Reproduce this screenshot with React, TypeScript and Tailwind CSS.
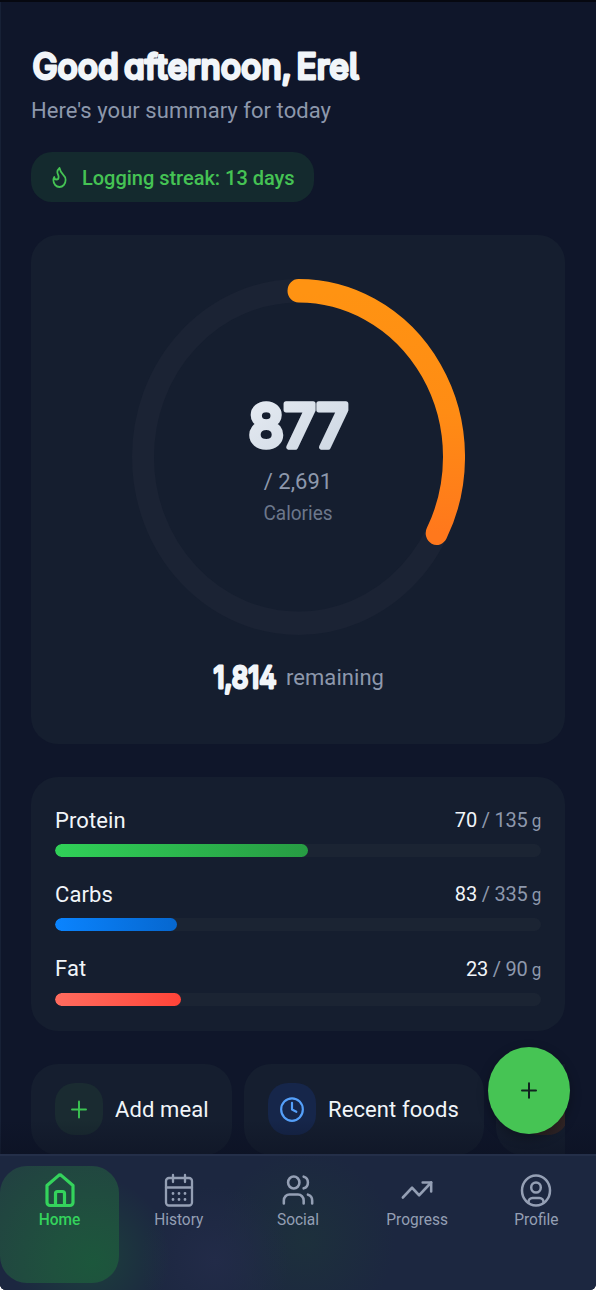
import type { ReactNode } from 'react';
import { Clock, Flame, Plus, TrendingUp, Users } from 'lucide-react';
import clsx from 'clsx';

const MACROS = [
  { name: 'Protein', value: 70, goal: 135, width: 52, bar: 'from-[#30d158] to-[#279c43]' },
  { name: 'Carbs', value: 83, goal: 335, width: 25, bar: 'from-[#0a84ff] to-[#0667cf]' },
  { name: 'Fat', value: 23, goal: 90, width: 26, bar: 'from-[#ff6b5e] to-[#ff4338]' },
];

const NAV_ITEMS = [
  { label: 'Home', icon: <HomeIcon /> },
  { label: 'History', icon: <CalendarIcon /> },
  { label: 'Social', icon: <Users preserveAspectRatio="none" strokeWidth={1.8} className="h-9 w-8.5" /> },
  { label: 'Progress', icon: <TrendingUp preserveAspectRatio="none" strokeWidth={1.8} className="h-9 w-8.5" /> },
  { label: 'Profile', icon: <ProfileIcon /> },
];

function HomeIcon() {
  return (
    <svg viewBox="0 0 34 36" className="h-9 w-8.5" fill="none" stroke="currentColor" strokeWidth="3.200" strokeLinejoin="round">
      <path d="M4 13.500 15.200 3.900a2.600 2.600 0 0 1 3.600 0L30 13.500V30.500a3 3 0 0 1-3 3H7a3 3 0 0 1-3-3Z" />
      <path d="M12.500 33V21.500a2 2 0 0 1 2-2h5a2 2 0 0 1 2 2V33" />
    </svg>
  );
}

function CalendarIcon() {
  return (
    <svg viewBox="0 0 34 36" className="h-9 w-8.5" fill="none" stroke="currentColor" strokeWidth="2.300" strokeLinecap="round">
      <rect x="4" y="6" width="26" height="27.500" rx="3" />
      <path d="M4 15.500h26M11 3v7M23 3v7" />
      <path strokeWidth="2.800" d="M11 21.500h.01M17 21.500h.01M23 21.500h.01M11 27.500h.01M17 27.500h.01M23 27.500h.01" />
    </svg>
  );
}

function ProfileIcon() {
  return (
    <svg viewBox="0 0 34 36" className="h-9 w-8.5" fill="none" stroke="currentColor" strokeWidth="2.500">
      <ellipse cx="17" cy="18.500" rx="14" ry="15" />
      <ellipse cx="17" cy="15.500" rx="4.800" ry="5" />
      <path d="M9.500 31v-1a4 4 0 0 1 4-4h7a4 4 0 0 1 4 4v1" />
    </svg>
  );
}

function CalorieRing() {
  return (
    <svg viewBox="0 0 333 333" preserveAspectRatio="none" className="h-[356px] w-[333px]" fill="none" strokeWidth="22">
      <defs>
        <linearGradient id="ring" x1="0" y1="0" x2="0" y2="1">
          <stop offset="0" stopColor="#ff9312" />
          <stop offset="0.5" stopColor="#ff8c14" />
          <stop offset="1" stopColor="#ff781c" />
        </linearGradient>
      </defs>
      <circle cx="166.500" cy="166.500" r="155.500" stroke="#1b2334" />
      <path d="M166.500 11A155.500 155.500 0 0 1 304.700 237.800" stroke="url(#ring)" strokeLinecap="round" />
    </svg>
  );
}

interface RoundedTextProps {
  children: string;
  width: number;
  height: number;
  size: number;
  stroke: number;
  fill?: string;
}

// Soft display lettering: a round-joined stroke around the text rounds off its corners
function RoundedText({ children, width, height, size, stroke, fill = '#f1f5f9' }: RoundedTextProps) {
  return (
    <svg width={width} height={height} className="overflow-visible">
      <defs>
        <linearGradient id="shine" x1="0" y1="0" x2="1" y2="1">
          <stop offset="0" stopColor="#e7ecf3" />
          <stop offset="1" stopColor="#cbd5e1" />
        </linearGradient>
      </defs>
      <text
        x={stroke / 2}
        y={height - stroke / 2}
        fontSize={size}
        textLength={width - stroke}
        lengthAdjust="spacingAndGlyphs"
        fill={fill}
        stroke={fill}
        strokeWidth={stroke}
        strokeLinejoin="round"
        className="font-['Inter'] font-medium [word-spacing:-4px] [font-feature-settings:'cv11','cv05','cv02']"
      >
        {children}
      </text>
    </svg>
  );
}

function ActionCard({ label, icon, className }: { label?: string; icon: ReactNode; className: string }) {
  return (
    <div className={clsx('flex h-[91px] shrink-0 items-center gap-3 rounded-[27px] bg-[#151e2f] pl-6', className)}>
      {icon}
      {label && (
        <span className="scale-y-104 whitespace-nowrap pt-[1px] text-[22px] tracking-[0.1px] text-[#f1f5f9]">{label}</span>
      )}
    </div>
  );
}

export default function App() {
  return (
    <div className="h-[1290px] w-[596px] bg-white font-['Roboto',sans-serif]">
      <div className="relative h-full overflow-hidden rounded-b-md border-t-2 border-t-[#060810] bg-[#0f162a] shadow-[inset_1px_0_0_#172136]">
        <main className="flex flex-col px-[31px]">
          <h1 className="mt-[43px] flex h-[44px] items-start pt-[7px]">
            <RoundedText width={329} height={28} size={35} stroke={2.8}>
              Good afternoon, Erel
            </RoundedText>
          </h1>
          <p className="flex h-[42px] items-center whitespace-nowrap pt-[1px] text-[#8d98ac]">
            <span className="scale-y-104 text-[22px] tracking-[0.05px]">Here's your summary for today</span>
          </p>

          <div className="mt-[21px] flex h-[50px] w-[283px] items-center rounded-[21px] bg-[#142a2e] pl-[18px] text-[#45c354]">
            <Flame preserveAspectRatio="none" strokeWidth={2} className="h-[24px] w-[21px]" />
            <span className="ml-3 scale-y-104 whitespace-nowrap pt-[2px] text-[20px] font-medium tracking-[-0.02px]">
              Logging streak: 13 days
            </span>
          </div>

          <section className="mt-[33px] flex h-[509px] flex-col items-center rounded-[27px] bg-[#151e2f]">
            <div className="mt-[44px] grid place-items-center *:[grid-area:1/1]">
              <CalorieRing />
              <div className="mt-[10px] flex flex-col items-center">
                <div className="flex h-[60px] items-center">
                  <RoundedText width={105} height={50} size={59.5} stroke={5.5} fill="url(#shine)">
                    877
                  </RoundedText>
                </div>
                <div className="mt-[10px] flex h-[32px] items-center text-[22px] text-[#8d98ac]">
                  <span className="scale-y-104">/ 2,691</span>
                </div>
                <div className="flex h-[32px] items-center pt-[2px] text-[19px] text-[#6c778b]">
                  <span className="scale-y-104">Calories</span>
                </div>
              </div>
            </div>
            <div className="mt-[22px] flex h-[40px] items-center gap-[8px]">
              <RoundedText width={66} height={24} size={30} stroke={2.8}>
                1,814
              </RoundedText>
              <span className="scale-y-104 text-[22px] tracking-[0.05px] text-[#8d98ac]">remaining</span>
            </div>
          </section>

          <section className="mt-[33px] h-[254px] rounded-[27px] bg-[#151e2f] px-6 pt-[26px]">
            {MACROS.map(macro => (
              <div key={macro.name} className="h-[74.300px]">
                <div className="flex h-[34px] items-center justify-between text-[#f1f5f9]">
                  <span className="scale-y-104 text-[22px] tracking-[0.1px]">{macro.name}</span>
                  <span className="scale-y-104 text-[20px] tracking-[-0.2px] text-[#8d98ac]">
                    <span className="text-[#f1f5f9]">{macro.value}</span> / {macro.goal}
                    <span className="ml-1 text-[17px]">g</span>
                  </span>
                </div>
                <div className="mt-[7px] h-[13px] overflow-hidden rounded-full bg-[#1b2433]">
                  <div className={clsx('h-full rounded-full bg-gradient-to-r', macro.bar)} style={{ width: `${macro.width}%` }} />
                </div>
              </div>
            ))}
          </section>

          <div className="mt-[32.500px] flex gap-3 overflow-hidden">
            <ActionCard
              label="Add meal"
              className="w-[201px]"
              icon={
                <div className="grid h-[52px] w-12 place-items-center rounded-[20px] bg-[#1a2b31] text-[#3cc453]">
                  <Plus preserveAspectRatio="none" strokeWidth={1.9} className="h-[27px] w-6" />
                </div>
              }
            />
            <ActionCard
              label="Recent foods"
              className="w-[240px]"
              icon={
                <div className="grid h-[52px] w-12 place-items-center rounded-[20px] bg-[#16264a] text-[#55a0fa]">
                  <Clock preserveAspectRatio="none" strokeWidth={2} className="h-[27px] w-[26px]" />
                </div>
              }
            />
            <ActionCard className="w-[200px]" icon={<div className="h-[52px] w-12 rounded-[20px] bg-[#332626]" />} />
          </div>
        </main>

        <div className="absolute inset-x-0 bottom-[136px] h-[34px] bg-gradient-to-t from-[#0b1020]/45 to-transparent" />

        <button
          aria-label="Log food"
          className="absolute top-[1045px] left-[488px] grid h-[87px] w-[82px] place-items-center rounded-[50%] bg-[#46c454] text-[#10231f] shadow-[0_4px_12px_rgba(0,0,0,0.3)]"
        >
          <Plus preserveAspectRatio="none" strokeWidth={2} className="h-[25px] w-6" />
        </button>

        <nav
          aria-label="Main navigation"
          className="absolute inset-x-0 bottom-0 grid h-[136px] grid-cols-5 border-t-2 border-[#242f49] bg-[#1c2740] bg-[radial-gradient(circle_at_90px_100px,#1c403d_0%,transparent_80px),radial-gradient(circle_at_215px_105px,#222b48_0%,transparent_75px),radial-gradient(circle_at_305px_85px,#1d303c_0%,transparent_90px)]"
        >
          {NAV_ITEMS.map(item => (
            <a
              key={item.label}
              href="#"
              aria-current={item.label === 'Home' ? 'page' : undefined}
              className={clsx(
                'mt-[10px] flex h-[117px] flex-col items-center rounded-[27px] pt-[6px]',
                item.label === 'Home'
                  ? 'bg-[radial-gradient(circle_at_78%_82%,#1c573c_0%,#1f513e_30%,#214640_75%,#223f42_100%)] text-[#34d35c]'
                  : 'text-[#949fb4]',
              )}
            >
              {item.icon}
              <span className={clsx('scale-y-104 text-[15.500px] leading-[24px]', item.label === 'Home' && 'font-medium')}>
                {item.label}
              </span>
            </a>
          ))}
        </nav>
      </div>
    </div>
  );
}
